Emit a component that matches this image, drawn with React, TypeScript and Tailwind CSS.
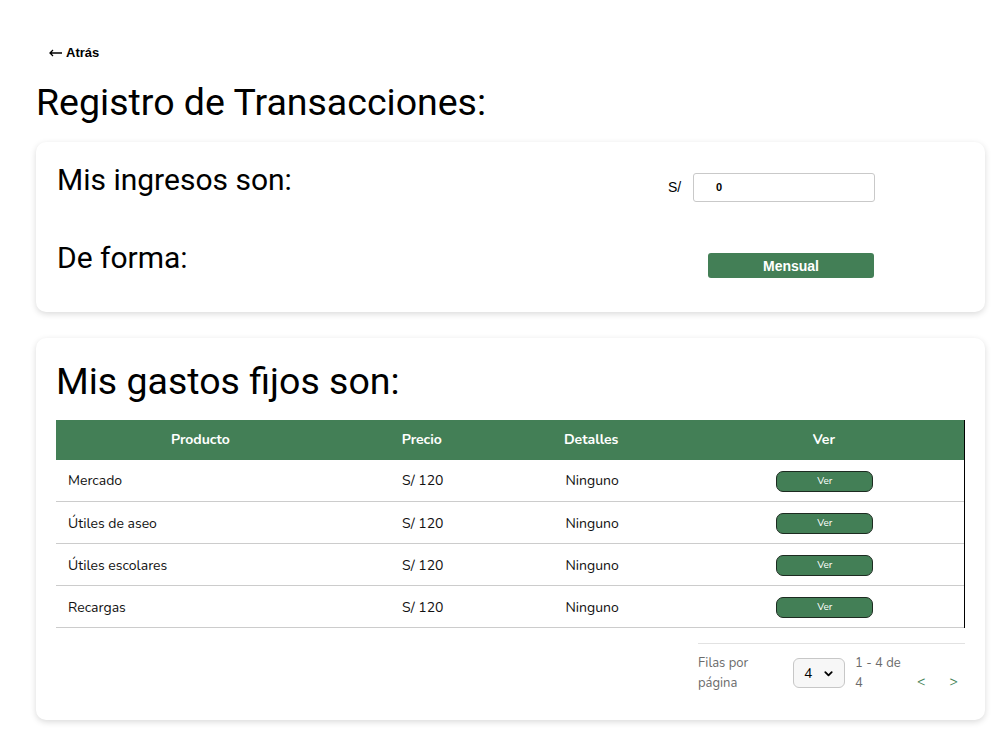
const rows = [
  { producto: 'Mercado', precio: 'S/ 120', detalles: 'Ninguno' },
  { producto: 'Útiles de aseo', precio: 'S/ 120', detalles: 'Ninguno' },
  { producto: 'Útiles escolares', precio: 'S/ 120', detalles: 'Ninguno' },
  { producto: 'Recargas', precio: 'S/ 120', detalles: 'Ninguno' },
];

const NUNITO = "font-['Nunito','Lato','Noto_Sans',sans-serif]";

export default function App() {
  return (
    <div className="min-h-[733px] bg-white px-[36px] pt-[43px] pb-[13px] text-black font-['Roboto',sans-serif]">
      <button className="ml-[13px] flex items-center gap-[4px] text-[13px] font-bold font-['Liberation_Sans',Arial,sans-serif]">
        <svg width="13" height="8" viewBox="0 0 13 8" fill="none" stroke="black" strokeWidth="1.3">
          <path d="M13 4H1M4 1L1 4l3 3" />
        </svg>
        Atrás
      </button>

      <h1 className="mt-[14px] text-[37.5px] leading-[50px]">Registro de Transacciones:</h1>

      {/* ingresos */}
      <div className="mt-[15px] w-[949px] h-[170px] rounded-[10px] bg-white shadow-[0_2px_6px_rgba(0,0,0,0.15)] px-[21px] pt-[20px]">
        <div className="flex items-start">
          <p className="w-[611px] text-[30px] leading-[36px]">Mis ingresos son:</p>
          <div className="mt-[11px] flex items-center">
            <span className="text-[14px] w-[25px] font-['Liberation_Sans',Arial,sans-serif]">S/</span>
            <div className="w-[182px] h-[29px] rounded-[3px] border border-[#c9c9c9] flex items-center pl-[22px] text-[11px] font-bold font-['Liberation_Sans',Arial,sans-serif]">
              0
            </div>
          </div>
        </div>
        <div className="mt-[38px] flex items-start">
          <p className="w-[651px] text-[30px] leading-[36px]">De forma:</p>
          <button className="mt-[13px] w-[166px] h-[25px] pt-[2px] rounded-[3px] bg-[#437f56] text-white text-[14px] leading-[20px] font-bold font-['Liberation_Sans',Arial,sans-serif]">
            Mensual
          </button>
        </div>
      </div>

      {/* gastos */}
      <div className="mt-[26px] w-[949px] h-[382px] rounded-[10px] bg-white shadow-[0_2px_6px_rgba(0,0,0,0.15)] px-[20px] pt-[20px]">
        <h2 className="text-[37.5px] leading-[46px]">Mis gastos fijos son:</h2>

        <table className={`mt-[16px] w-[909px] border-collapse text-[14px] ${NUNITO}`}>
          <thead>
            <tr className="h-[40px] bg-[#437f56] text-white font-bold">
              <th className="w-[289px] font-bold">Producto</th>
              <th className="w-[154px] font-bold">Precio</th>
              <th className="w-[185px] font-bold">Detalles</th>
              <th className="w-[281px] font-bold border-r-[1.5px] border-black">Ver</th>
            </tr>
          </thead>
          <tbody>
            {rows.map((r) => (
              <tr key={r.producto} className="h-[42px] border-b border-[#cccccc] text-[#111]">
                <td className="pl-[12px] pt-[1px]">{r.producto}</td>
                <td className="text-center pt-[1px] pl-[2px]">{r.precio}</td>
                <td className="text-center pt-[1px] pl-[2px]">{r.detalles}</td>
                <td className="text-center border-r-[1.5px] border-black">
                  <button className="w-[97px] h-[21px] ml-[2px] rounded-[7px] border border-[#1d2b21] bg-[#437f56] text-white text-[10px] leading-none">
                    Ver
                  </button>
                </td>
              </tr>
            ))}
          </tbody>
        </table>

        <div className={`ml-[642px] mt-[15px] w-[267px] border-t border-[#e2e2e2] pt-[9px] flex items-start text-[13px] text-[#6b6b6b] ${NUNITO}`}>
          <p className="w-[95px] leading-[20px]">Filas por<br />página</p>
          <div className="mt-[5px] w-[52px] h-[30px] rounded-[6px] border border-[#c7c7c7] bg-[#f7f7f7] flex items-center justify-between px-[10px] text-[14px] text-black">
            <span>4</span>
            <svg width="11" height="11" viewBox="0 0 24 24" fill="none" stroke="black" strokeWidth="4" strokeLinecap="round" strokeLinejoin="round">
              <path d="M5 9l7 7 7-7" />
            </svg>
          </div>
          <p className="ml-[10px] w-[62px] leading-[20px]">1 - 4 de<br />4</p>
          <div className="mt-[18px] flex gap-[24px] text-[#437f56] text-[14px]">
            <span>&lt;</span>
            <span>&gt;</span>
          </div>
        </div>
      </div>
    </div>
  );
}
